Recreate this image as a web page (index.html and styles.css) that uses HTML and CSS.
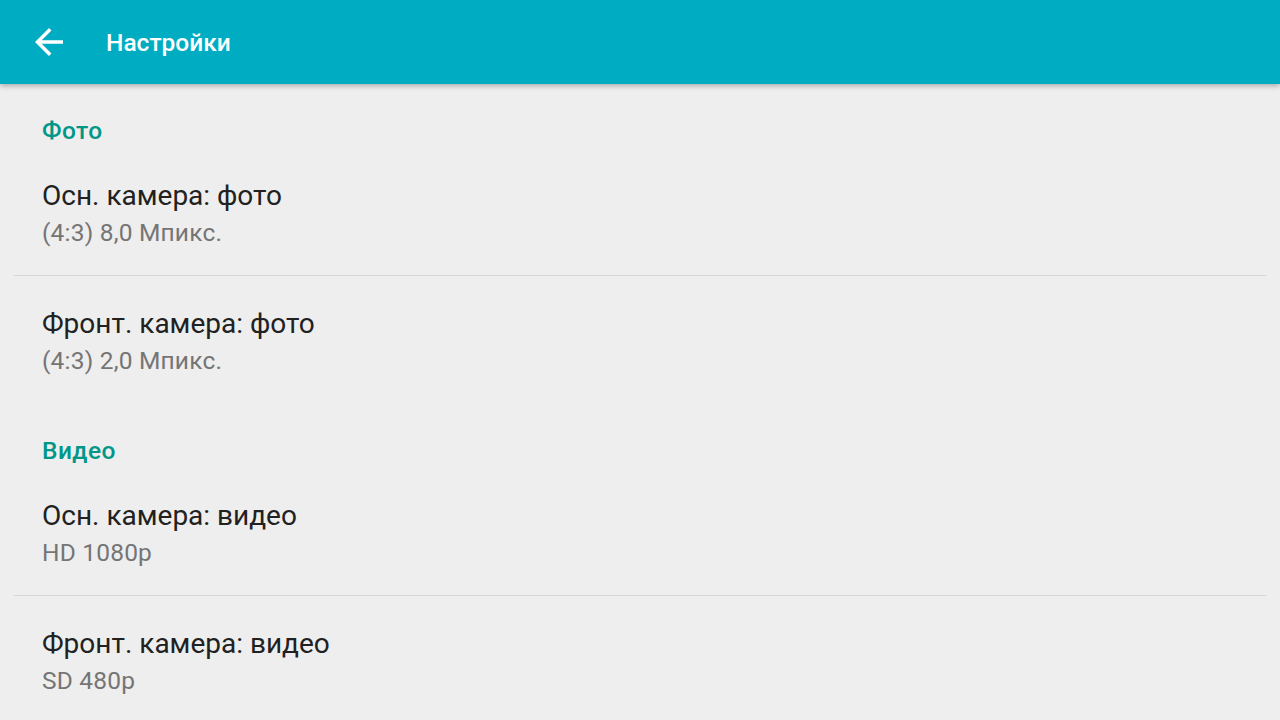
FILE: index.html
```html
<!DOCTYPE html>
<html lang="ru">
<head>
<meta charset="utf-8">
<title>Настройки</title>
<link rel="stylesheet" href="styles.css">
</head>
<body>
<header class="toolbar">
  <button class="back" aria-label="Назад">
    <svg width="42" height="42" viewBox="0 0 24 24"><path fill="#fff" d="M20 11H7.83l5.59-5.59L12 4l-8 8 8 8 1.41-1.41L7.83 13H20v-2z"/></svg>
  </button>
  <h1 class="title">Настройки</h1>
</header>
<main class="list">
  <section class="group">
    <h2 class="category">Фото</h2>
    <div class="item">
      <div class="item-title">Осн. камера: фото</div>
      <div class="item-summary">(4:3) 8,0 Мпикс.</div>
    </div>
    <div class="item">
      <div class="item-title">Фронт. камера: фото</div>
      <div class="item-summary">(4:3) 2,0 Мпикс.</div>
    </div>
  </section>
  <section class="group">
    <h2 class="category">Видео</h2>
    <div class="item">
      <div class="item-title">Осн. камера: видео</div>
      <div class="item-summary">HD 1080p</div>
    </div>
    <div class="item">
      <div class="item-title">Фронт. камера: видео</div>
      <div class="item-summary">SD 480p</div>
    </div>
  </section>
</main>
</body>
</html>
```
FILE: styles.css
```css
html, body {
  margin: 0;
  padding: 0;
  height: 100%;
  overflow: hidden;
}
body {
  background: #eeeeee;
  font-family: Roboto, "Noto Sans", "Liberation Sans", sans-serif;
}
.toolbar {
  height: 84px;
  background: #00acc1;
  display: flex;
  align-items: center;
  position: relative;
  z-index: 1;
  box-shadow: 0 2px 5px rgba(0,0,0,0.28);
}
.back {
  width: 42px;
  height: 42px;
  margin-left: 28px;
  padding: 0;
  border: 0;
  background: none;
  display: flex;
}
.title {
  margin: 0 0 0 36px;
  color: #fff;
  font-size: 24.5px;
  font-weight: 500;
  letter-spacing: 0;
}
.list {
  display: flex;
  flex-direction: column;
}
.category {
  height: 64px;
  margin: 0;
  padding: 33px 42px 0;
  box-sizing: border-box;
  color: #009688;
  font-size: 24.5px;
  line-height: 28px;
  font-weight: 500;
  letter-spacing: 0.45px;
}
.item {
  height: 128px;
  box-sizing: border-box;
  display: flex;
  flex-direction: column;
  justify-content: flex-start;
  margin: 0 14px;
  padding: 29px 28px 0;
  border-bottom: 1px solid #d5d5d5;
}
.item:last-child {
  border-bottom-color: transparent;
}
.item-title {
  color: #212121;
  font-size: 28px;
  line-height: 37px;
}
.item-summary {
  margin-top: 2px;
  color: #757575;
  font-size: 24.5px;
  line-height: 33px;
  letter-spacing: 0.2px;
}
```
